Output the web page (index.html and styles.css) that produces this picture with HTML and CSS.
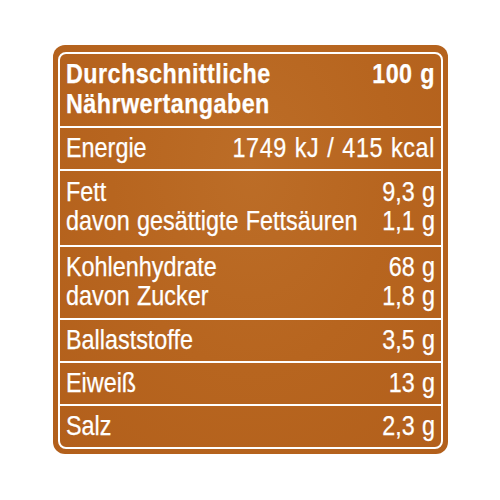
FILE: index.html
```html
<!DOCTYPE html>
<html>
<head>
    <title>Nährwerte</title>
    <meta charset="utf-8">
    <link rel="stylesheet" href="styles.css">
</head>
<body>
    <div class="page">
        <div class="panel">
            <div class="table">
                <div class="row row-head">
                    <div class="line">
                        <span>Durchschnittliche</span>
                        <span>100 g</span>
                    </div>
                    <div class="line">
                        <span>Nährwertangaben</span>
                    </div>
                </div>
                <div class="row">
                    <div class="line">
                        <span>Energie</span>
                        <span class="spaced">1749 kJ / 415 kcal</span>
                    </div>
                </div>
                <div class="row row-tall">
                    <div class="line">
                        <span>Fett</span>
                        <span>9,3 g</span>
                    </div>
                    <div class="line">
                        <span>davon gesättigte Fettsäuren</span>
                        <span>1,1 g</span>
                    </div>
                </div>
                <div class="row row-double">
                    <div class="line">
                        <span>Kohlenhydrate</span>
                        <span>68 g</span>
                    </div>
                    <div class="line">
                        <span>davon Zucker</span>
                        <span>1,8 g</span>
                    </div>
                </div>
                <div class="row">
                    <div class="line">
                        <span>Ballaststoffe</span>
                        <span>3,5 g</span>
                    </div>
                </div>
                <div class="row">
                    <div class="line">
                        <span>Eiweiß</span>
                        <span>13 g</span>
                    </div>
                </div>
                <div class="row row-last">
                    <div class="line">
                        <span>Salz</span>
                        <span>2,3 g</span>
                    </div>
                </div>
            </div>
        </div>
    </div>
</body>
</html>
```

FILE: styles.css
```css
body {
    margin: 0;
    background: #ffffff;
    font-family: "Liberation Sans", Arial, sans-serif;
    color: #ffffff;
}
.page {
    padding-top: 45px;
}
.panel {
    width: 395px;
    height: 409px;
    box-sizing: border-box;
    margin: 0 auto;
    padding: 7px 5px 6px 5px;
    border-radius: 12px;
    background: radial-gradient(ellipse at 50% 30%, #bc6d27 0%, #b7651f 50%, #b25f1b 100%);
}
.table {
    border: 2px solid #ffffff;
    border-radius: 8px;
}
.row {
    padding: 5px 6px 7px 6px;
    border-bottom: 2px solid #ffffff;
    font-size: 27.5px;
    line-height: 29px;
    word-spacing: 1px;
    -webkit-text-stroke: 0.25px #ffffff;
}
.row-head {
    font-weight: bold;
    line-height: 30px;
    letter-spacing: 0.5px;
}
.row-tall {
    padding: 6px 6px 10px 6px;
}
.row-double {
    padding: 5px 6px 8px 6px;
}
.row-last {
    border-bottom: none;
}
.spaced {
    letter-spacing: 0.7px;
}
/* condensed look: lay the line out wider, then squeeze it back */
.line {
    display: flex;
    justify-content: space-between;
    white-space: nowrap;
    width: calc(100% / 0.85);
    transform: scaleX(0.85);
    transform-origin: left center;
}
```
